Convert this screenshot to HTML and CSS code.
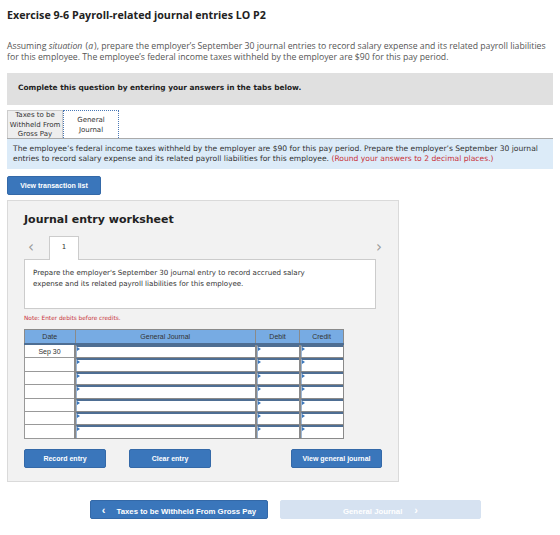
FILE: index.html
```html
<!DOCTYPE html>
<html lang="en">
<head>
  <meta charset="UTF-8">
  <title>Exercise 9-6</title>
  <link rel="stylesheet" href="styles.css">
</head>
<body>

  <h1 class="title">Exercise 9-6 Payroll-related journal entries LO P2</h1>

  <p class="intro">Assuming <em>situation</em> (<em>a</em>), prepare the employer’s September 30 journal entries to record salary expense and its related payroll liabilities for this employee. The employee’s federal income taxes withheld by the employer are $90 for this pay period.</p>

  <div class="instructions">Complete this question by entering your answers in the tabs below.</div>

  <div class="tabs">
    <div class="tab">Taxes to be Withheld From Gross Pay</div>
    <div class="tab active">General Journal</div>
  </div>

  <div class="info">
    The employee’s federal income taxes withheld by the employer are $90 for this pay period. Prepare the employer’s September 30 journal entries to record salary expense and its related payroll liabilities for this employee. <span class="red">(Round your answers to 2 decimal places.)</span>
  </div>

  <button class="btn btn-small">View transaction list</button>

  <div class="worksheet">
    <h2>Journal entry worksheet</h2>

    <div class="entry-nav">
      <span class="arrow">&lsaquo;</span>
      <span class="entry-tab">1</span>
      <span class="arrow right">&rsaquo;</span>
    </div>
    <div class="entry-desc">
      Prepare the employer's September 30 journal entry to record accrued salary expense and its related payroll liabilities for this employee.
    </div>

    <div class="note">Note: Enter debits before credits.</div>

    <table class="journal">
      <thead>
        <tr>
          <th class="c-date">Date</th>
          <th class="c-acct">General Journal</th>
          <th class="c-amt">Debit</th>
          <th class="c-amt">Credit</th>
        </tr>
      </thead>
      <tbody id="rows"></tbody>
    </table>

    <div class="ws-buttons">
      <button class="btn">Record entry</button>
      <button class="btn">Clear entry</button>
      <button class="btn btn-right">View general journal</button>
    </div>
  </div>

  <div class="pager">
    <button class="btn btn-prev"><span class="chev">&lsaquo;</span>Taxes to be Withheld From Gross Pay</button>
    <button class="btn btn-next">General Journal<span class="chev after">&rsaquo;</span></button>
  </div>

  <script>
    // seven empty journal lines, only the first one has a date
    var tbody = document.getElementById('rows');
    for (var i = 0; i < 7; i++) {
      var date = i === 0 ? 'Sep 30' : '';
      tbody.innerHTML += '<tr><td class="c-date">' + date + '</td>' +
        '<td class="cell"><div class="inp"></div></td>' +
        '<td class="cell"><div class="inp"></div></td>' +
        '<td class="cell"><div class="inp"></div></td></tr>';
    }
  </script>

</body>
</html>
```

FILE: styles.css
```css
body {
  margin: 0;
  padding: 8px 7px;
  font-family: "Open Sans", "Lato", sans-serif;
  color: #333;
  width: 546px;
}

.title {
  font-size: 10.7px;
  font-weight: bold;
  color: #222;
  margin: 0 0 19px 0;
}

.intro {
  font-size: 8.7px;
  line-height: 10.5px;
  color: #555;
  margin: 0 -5px 11px 0;
}

.intro em {
  margin-right: 1px;
}

.instructions {
  background-color: #e0e0e0;
  font-family: "DejaVu Sans", Verdana, sans-serif;
  font-weight: bold;
  font-size: 7.4px;
  color: #222;
  height: 32px;
  line-height: 29px;
  padding-left: 11px;
}

.tabs {
  display: flex;
  margin-top: 5px;
  font-family: "DejaVu Sans", Verdana, sans-serif;
  font-size: 7px;
  line-height: 9.5px;
}

.tab {
  width: 56px;
  height: 28px;
  box-sizing: border-box;
  background-color: #eee;
  border: 1px solid #ccc;
  border-bottom: none;
  text-align: center;
  color: #333;
}

.tab.active {
  background-color: #fff;
  border: 1px dotted #4a78b5;
  border-bottom: none;
  padding-top: 5px;
}

.info {
  background-color: #dcebf8;
  border-top: 1px solid #aaa;
  font-family: "DejaVu Sans", Verdana, sans-serif;
  font-size: 7.6px;
  line-height: 10px;
  color: #333;
  padding: 5px 6px;
  height: 20px;
}

.red {
  color: #c8323a;
}

.btn {
  background-color: #3a76bb;
  color: #fff;
  border: 1px solid #3469a8;
  border-radius: 2px;
  font-family: "Liberation Sans", Arial, sans-serif;
  font-weight: bold;
  font-size: 7px;
  height: 19px;
  padding: 0;
  cursor: pointer;
}

.btn-small {
  width: 94px;
  margin-top: 7px;
}

.worksheet {
  background-color: #f2f2f2;
  border: 1px solid #dadada;
  width: 392px;
  height: 282px;
  box-sizing: border-box;
  margin-top: 5px;
  padding: 0 16px;
}

.worksheet h2 {
  font-family: "DejaVu Sans", Verdana, sans-serif;
  font-size: 11px;
  color: #222;
  margin: 12px 0 8px 0;
}

.entry-nav {
  display: flex;
  align-items: flex-end;
  height: 25px;
  font-family: "DejaVu Sans", Verdana, sans-serif;
}

.arrow {
  color: #999;
  font-size: 15px;
  width: 21px;
  padding-left: 4px;
  line-height: 24px;
}

.arrow.right {
  margin-left: auto;
  width: auto;
}

.entry-tab {
  width: 30px;
  height: 24px;
  box-sizing: border-box;
  background-color: #fff;
  border: 1px solid #ccc;
  border-bottom: none;
  text-align: center;
  font-size: 7px;
  line-height: 20px;
  position: relative;
  top: 1px;
}

.entry-desc {
  background-color: #fff;
  border: 1px solid #ccc;
  width: 352px;
  height: 50px;
  box-sizing: border-box;
  font-family: "DejaVu Sans", Verdana, sans-serif;
  font-size: 7.1px;
  line-height: 11px;
  color: #333;
  padding: 7px 48px 7px 8px;
}

.note {
  font-family: "DejaVu Sans", Verdana, sans-serif;
  font-size: 5.8px;
  color: #c8323a;
  margin: 6px 0 8px 0;
}

.journal {
  border-collapse: collapse;
  width: 320px;
  font-family: "Liberation Sans", Arial, sans-serif;
  font-size: 7px;
}

.journal th {
  background-color: #77abe3;
  color: #333;
  font-weight: normal;
  height: 13px;
  border: 1px solid #8a8a8a;
  border-bottom: 2px solid #4e6e93;
  padding: 0;
}

.journal .c-date {
  width: 49px;
}

.journal .c-amt {
  width: 43px;
}

.journal td {
  padding: 0;
  height: 12.4px;
}

.journal td.c-date {
  background-color: #fff;
  border: 1px solid #999;
  border-top-color: #bbb;
  text-align: center;
  color: #333;
}

.journal td.cell {
  background-color: #fff;
  border-left: 2px solid #8a8a8a;
  border-right: 1px solid #8a8a8a;
  border-bottom: 1px solid #8a8a8a;
}

.inp {
  position: relative;
  height: 10.4px;
  border-top: 2px solid #4e6e93;
  border-left: 1px solid #9eb7d4;
}

/* little marker in the corner of each entry cell */
.inp::before {
  content: "";
  position: absolute;
  top: 0;
  left: 0;
  border-top: 2px solid transparent;
  border-bottom: 2px solid transparent;
  border-left: 3px solid #3a76bb;
}

.ws-buttons {
  display: flex;
  gap: 23px;
  margin-top: 10px;
}

.ws-buttons .btn {
  width: 82px;
}

.ws-buttons .btn-right {
  width: 91px;
  margin-left: 57px;
}

.pager {
  display: flex;
  gap: 12px;
  margin-top: 18px;
  padding-left: 83px;
}

.pager .btn {
  font-size: 7.8px;
}

.chev {
  font-size: 11px;
  margin-right: 11px;
}

.chev.after {
  margin: 0 0 0 12px;
}

.btn-prev {
  width: 178px;
}

.btn-next {
  width: 201px;
  background-color: #d6e2f1;
  border-color: #d6e2f1;
  color: #fff;
}
```
